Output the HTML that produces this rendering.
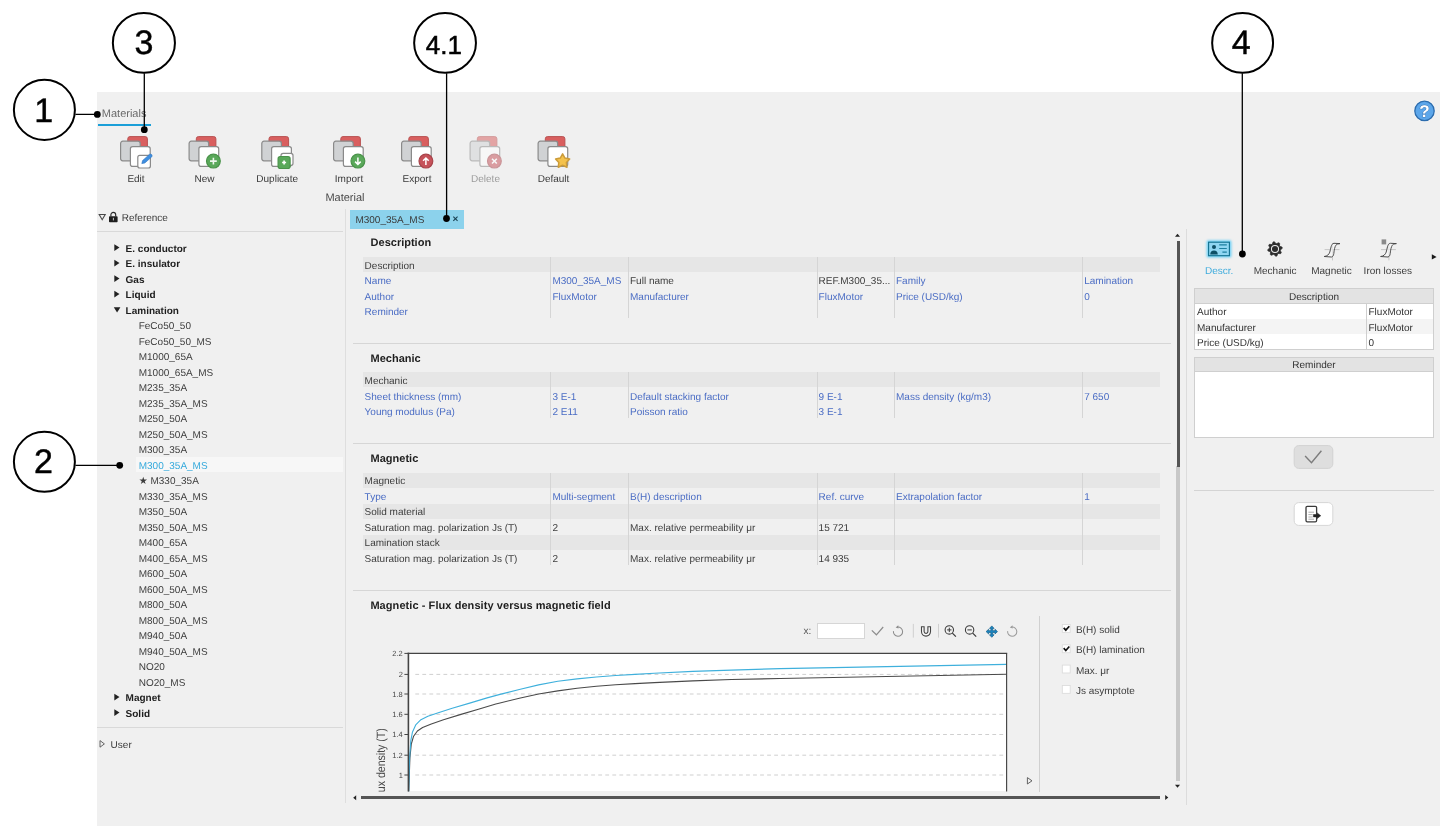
<!DOCTYPE html><html><head><meta charset="utf-8"><title>Materials</title><style>
html,body{margin:0;padding:0;background:#fff;}
body{width:1452px;height:833px;position:relative;overflow:hidden;font-family:"Liberation Sans","DejaVu Sans",sans-serif;font-size:10px;color:#3c3c3c;}
.abs{position:absolute;}
#root{position:absolute;left:0;top:0;width:1452px;height:833px;will-change:transform;text-rendering:geometricPrecision;}
#panel{position:absolute;left:97px;top:92px;width:1343px;height:734px;background:#f0f0f0;}
.t{position:absolute;white-space:nowrap;line-height:1;}
.b{font-weight:bold;color:#1e1e1e;}
.blue{color:#4a6cc4;}
.hl{color:#33a9dc;}
svg{position:absolute;left:0;top:0;overflow:visible;}
.row{position:absolute;height:15.5px;}
.hdr{background:#e6e6e6;}
.vl{position:absolute;width:1.2px;background:#d5d5d5;}
.hlne{position:absolute;height:1px;background:#d6d6d6;}
</style></head><body>
<div id="root">
<div id="panel"></div>
<div class="t " style="left:101.8px;top:109px;font-size:11px;color:#6a6a6a;">Materials</div>
<div class="abs" style="left:98px;top:123.5px;width:53px;height:2.2px;background:#1b9fd8;"></div>
<svg width="1452" height="833" viewBox="0 0 1452 833"><g transform="translate(120,136)"><rect x="7.8" y="0.6" width="19.6" height="19" rx="2.2" fill="#d95f5f" stroke="#b85252" stroke-width="1"/><rect x="0.6" y="5.2" width="19.6" height="19.6" rx="2.2" fill="#d0d2d4" stroke="#8a8a8a" stroke-width="1.2"/><rect x="10.4" y="10.6" width="19.8" height="19.8" rx="2.2" fill="#fff" stroke="#8a8a8a" stroke-width="1.2"/><rect x="17.8" y="19.4" width="12.6" height="12.6" rx="2" fill="#fff" stroke="#8a8a8a" stroke-width="1.2"/><path d="M21.8 27.6 L22.6 24.6 L29.4 18.4 Q30.8 17.6 31.8 18.8 Q32.6 20 31.6 21 L24.8 27 Z" fill="#3f8fe0" stroke="#2f74c0" stroke-width="0.6"/></g><g transform="translate(188.5,136)"><rect x="7.8" y="0.6" width="19.6" height="19" rx="2.2" fill="#d95f5f" stroke="#b85252" stroke-width="1"/><rect x="0.6" y="5.2" width="19.6" height="19.6" rx="2.2" fill="#d0d2d4" stroke="#8a8a8a" stroke-width="1.2"/><rect x="10.4" y="10.6" width="19.8" height="19.8" rx="2.2" fill="#fff" stroke="#8a8a8a" stroke-width="1.2"/><circle cx="24.9" cy="25.1" r="6.9" fill="#5aa85a" stroke="#4a934a" stroke-width="1.2"/><path d="M24.9 21.7 V28.5 M21.5 25.1 H28.3" stroke="#eef6ee" stroke-width="1.6" fill="none"/></g><g transform="translate(261.2,136)"><rect x="7.8" y="0.6" width="19.6" height="19" rx="2.2" fill="#d95f5f" stroke="#b85252" stroke-width="1"/><rect x="0.6" y="5.2" width="19.6" height="19.6" rx="2.2" fill="#d0d2d4" stroke="#8a8a8a" stroke-width="1.2"/><rect x="10.4" y="10.6" width="19.8" height="19.8" rx="2.2" fill="#fff" stroke="#8a8a8a" stroke-width="1.2"/><rect x="19.8" y="17.4" width="12" height="12" rx="2.2" fill="#fff" stroke="#8a8a8a" stroke-width="1.2"/><rect x="16.9" y="20.5" width="12" height="12" rx="2.2" fill="#5aa85a" stroke="#4a934a" stroke-width="1.2"/><path d="M22.9 24.5 V28.5 M20.9 26.5 H24.9" stroke="#fff" stroke-width="1.6" fill="none"/></g><g transform="translate(333,136)"><rect x="7.8" y="0.6" width="19.6" height="19" rx="2.2" fill="#d95f5f" stroke="#b85252" stroke-width="1"/><rect x="0.6" y="5.2" width="19.6" height="19.6" rx="2.2" fill="#d0d2d4" stroke="#8a8a8a" stroke-width="1.2"/><rect x="10.4" y="10.6" width="19.8" height="19.8" rx="2.2" fill="#fff" stroke="#8a8a8a" stroke-width="1.2"/><circle cx="24.9" cy="25.1" r="6.9" fill="#5aa85a" stroke="#4a934a" stroke-width="1.2"/><path d="M24.9 21.4 V28.2 M22.1 25.6 L24.9 28.4 L27.7 25.6" stroke="#fff" stroke-width="1.5" fill="none"/></g><g transform="translate(401,136)"><rect x="7.8" y="0.6" width="19.6" height="19" rx="2.2" fill="#d95f5f" stroke="#b85252" stroke-width="1"/><rect x="0.6" y="5.2" width="19.6" height="19.6" rx="2.2" fill="#d0d2d4" stroke="#8a8a8a" stroke-width="1.2"/><rect x="10.4" y="10.6" width="19.8" height="19.8" rx="2.2" fill="#fff" stroke="#8a8a8a" stroke-width="1.2"/><circle cx="24.9" cy="25.1" r="6.9" fill="#c6525a" stroke="#a8434a" stroke-width="1.2"/><path d="M24.9 29 V22.2 M22.1 24.8 L24.9 22 L27.7 24.8" stroke="#fff" stroke-width="1.5" fill="none"/></g><g transform="translate(469.5,136)" opacity="0.52"><rect x="7.8" y="0.6" width="19.6" height="19" rx="2.2" fill="#d95f5f" stroke="#b85252" stroke-width="1"/><rect x="0.6" y="5.2" width="19.6" height="19.6" rx="2.2" fill="#d0d2d4" stroke="#8a8a8a" stroke-width="1.2"/><rect x="10.4" y="10.6" width="19.8" height="19.8" rx="2.2" fill="#fff" stroke="#8a8a8a" stroke-width="1.2"/><circle cx="24.9" cy="25.1" r="6.9" fill="#c6525a" stroke="#a8434a" stroke-width="1.2"/><path d="M22.5 22.7 L27.3 27.5 M27.3 22.7 L22.5 27.5" stroke="#fff" stroke-width="1.6" fill="none"/></g><g transform="translate(537.5,136)"><rect x="7.8" y="0.6" width="19.6" height="19" rx="2.2" fill="#d95f5f" stroke="#b85252" stroke-width="1"/><rect x="0.6" y="5.2" width="19.6" height="19.6" rx="2.2" fill="#d0d2d4" stroke="#8a8a8a" stroke-width="1.2"/><rect x="10.4" y="10.6" width="19.8" height="19.8" rx="2.2" fill="#fff" stroke="#8a8a8a" stroke-width="1.2"/><polygon points="25.10,17.90 27.45,22.06 32.14,23.01 28.90,26.54 29.45,31.29 25.10,29.30 20.75,31.29 21.30,26.54 18.06,23.01 22.75,22.06" fill="#f4c24c" stroke="#cc9c3a" stroke-width="1.5" stroke-linejoin="round"/></g></svg>
<div class="t " style="left:36px;width:200px;text-align:center;top:175px;font-size:10px;color:#3a3a3a;">Edit</div>
<div class="t " style="left:104.5px;width:200px;text-align:center;top:175px;font-size:10px;color:#3a3a3a;">New</div>
<div class="t " style="left:177.2px;width:200px;text-align:center;top:175px;font-size:10px;color:#3a3a3a;">Duplicate</div>
<div class="t " style="left:249px;width:200px;text-align:center;top:175px;font-size:10px;color:#3a3a3a;">Import</div>
<div class="t " style="left:317px;width:200px;text-align:center;top:175px;font-size:10px;color:#3a3a3a;">Export</div>
<div class="t " style="left:385.5px;width:200px;text-align:center;top:175px;font-size:10px;color:#9c9c9c;">Delete</div>
<div class="t " style="left:453.5px;width:200px;text-align:center;top:175px;font-size:10px;color:#3a3a3a;">Default</div>
<div class="t " style="left:325.4px;top:193px;font-size:11px;color:#4a4a4a;">Material</div>
<div class="t " style="left:121.8px;top:214px;font-size:10px;color:#3c3c3c;">Reference</div>
<div class="t " style="left:110.6px;top:741px;font-size:10px;color:#3c3c3c;">User</div>
<div class="hlne" style="left:97px;top:231px;width:246px;background:#d9d9d9;"></div>
<div class="hlne" style="left:97px;top:726.5px;width:246px;background:#d9d9d9;"></div>
<div class="abs" style="left:136px;top:457.3px;width:207px;height:15.2px;background:#f7f7f7;"></div>
<div class="t b" style="left:125.6px;top:245px;font-size:10px;">E. conductor</div>
<div class="t b" style="left:125.6px;top:260px;font-size:10px;">E. insulator</div>
<div class="t b" style="left:125.6px;top:276px;font-size:10px;">Gas</div>
<div class="t b" style="left:125.6px;top:291px;font-size:10px;">Liquid</div>
<div class="t b" style="left:125.6px;top:307px;font-size:10px;">Lamination</div>
<div class="t " style="left:138.7px;top:322px;font-size:10px;">FeCo50_50</div>
<div class="t " style="left:138.7px;top:338px;font-size:10px;">FeCo50_50_MS</div>
<div class="t " style="left:138.7px;top:353px;font-size:10px;">M1000_65A</div>
<div class="t " style="left:138.7px;top:369px;font-size:10px;">M1000_65A_MS</div>
<div class="t " style="left:138.7px;top:384px;font-size:10px;">M235_35A</div>
<div class="t " style="left:138.7px;top:400px;font-size:10px;">M235_35A_MS</div>
<div class="t " style="left:138.7px;top:415px;font-size:10px;">M250_50A</div>
<div class="t " style="left:138.7px;top:431px;font-size:10px;">M250_50A_MS</div>
<div class="t " style="left:138.7px;top:446px;font-size:10px;">M300_35A</div>
<div class="t hl" style="left:138.7px;top:462px;font-size:10px;">M300_35A_MS</div>
<div class="t " style="left:138.7px;top:477px;font-size:10px;">★ M330_35A</div>
<div class="t " style="left:138.7px;top:493px;font-size:10px;">M330_35A_MS</div>
<div class="t " style="left:138.7px;top:508px;font-size:10px;">M350_50A</div>
<div class="t " style="left:138.7px;top:524px;font-size:10px;">M350_50A_MS</div>
<div class="t " style="left:138.7px;top:539px;font-size:10px;">M400_65A</div>
<div class="t " style="left:138.7px;top:555px;font-size:10px;">M400_65A_MS</div>
<div class="t " style="left:138.7px;top:570px;font-size:10px;">M600_50A</div>
<div class="t " style="left:138.7px;top:586px;font-size:10px;">M600_50A_MS</div>
<div class="t " style="left:138.7px;top:601px;font-size:10px;">M800_50A</div>
<div class="t " style="left:138.7px;top:617px;font-size:10px;">M800_50A_MS</div>
<div class="t " style="left:138.7px;top:632px;font-size:10px;">M940_50A</div>
<div class="t " style="left:138.7px;top:648px;font-size:10px;">M940_50A_MS</div>
<div class="t " style="left:138.7px;top:663px;font-size:10px;">NO20</div>
<div class="t " style="left:138.7px;top:679px;font-size:10px;">NO20_MS</div>
<div class="t b" style="left:125.6px;top:694px;font-size:10px;">Magnet</div>
<div class="t b" style="left:125.6px;top:710px;font-size:10px;">Solid</div>
<svg width="1452" height="833" viewBox="0 0 1452 833"><path d="M114.3 244.3 v6.6 l5.2 -3.3 z" fill="#222"/><path d="M114.3 259.79999999999995 v6.6 l5.2 -3.3 z" fill="#222"/><path d="M114.3 275.29999999999995 v6.6 l5.2 -3.3 z" fill="#222"/><path d="M114.3 290.79999999999995 v6.6 l5.2 -3.3 z" fill="#222"/><path d="M113.8 307.2 h6.6 l-3.3 5.4 z" fill="#222"/><path d="M114.3 693.8 v6.6 l5.2 -3.3 z" fill="#222"/><path d="M114.3 709.3 v6.6 l5.2 -3.3 z" fill="#222"/><path d="M99.2 214.5 h6 l-3 5.2 z" fill="none" stroke="#484848" stroke-width="1.1"/><path d="M100 740.6 v6.6 l4.4 -3.3 z" fill="none" stroke="#555" stroke-width="0.9"/><rect x="109" y="216.2" width="8.6" height="6" rx="0.8" fill="#1e1e1e"/><path d="M110.9 216.4 v-1.6 a2.4 2.4 0 0 1 4.8 0 v1.6" fill="none" stroke="#2a2a2a" stroke-width="1.15"/><rect x="112.9" y="217.8" width="0.9" height="2.6" fill="#ddd"/></svg>
<div class="vl" style="left:345.2px;top:209px;height:594px;background:#dedede;"></div>
<div class="vl" style="left:1186.2px;top:229px;height:576px;background:#dcdcdc;"></div>
<div class="abs" style="left:349.6px;top:210.3px;width:114.4px;height:18.4px;background:#8cd2ec;"></div>
<div class="t " style="left:355.4px;top:216px;font-size:10px;color:#3a3a3a;">M300_35A_MS</div>
<div class="t " style="left:452.6px;top:215px;font-size:10px;color:#173f50;font-weight:bold;">×</div>
<div class="t b" style="left:370.6px;top:238px;font-size:11px;">Description</div>
<div class="row hdr" style="left:362.6px;top:256.9px;width:797px;height:15.1px;"></div>
<div class="vl" style="left:550.1px;top:256.9px;height:61.6px;"></div>
<div class="vl" style="left:628.0px;top:256.9px;height:61.6px;"></div>
<div class="vl" style="left:816.5px;top:256.9px;height:61.6px;"></div>
<div class="vl" style="left:893.7px;top:256.9px;height:61.6px;"></div>
<div class="vl" style="left:1081.9px;top:256.9px;height:61.6px;"></div>
<div class="t " style="left:364.6px;top:262px;font-size:10px;">Description</div>
<div class="t blue" style="left:364.6px;top:277px;font-size:10px;">Name</div>
<div class="t blue" style="left:552.4px;top:277px;font-size:10px;">M300_35A_MS</div>
<div class="t " style="left:630px;top:277px;font-size:10px;">Full name</div>
<div class="t " style="left:818.6px;top:277px;font-size:10px;">REF.M300_35...</div>
<div class="t blue" style="left:896px;top:277px;font-size:10px;">Family</div>
<div class="t blue" style="left:1084.2px;top:277px;font-size:10px;">Lamination</div>
<div class="t blue" style="left:364.6px;top:293px;font-size:10px;">Author</div>
<div class="t blue" style="left:552.4px;top:293px;font-size:10px;">FluxMotor</div>
<div class="t blue" style="left:630px;top:293px;font-size:10px;">Manufacturer</div>
<div class="t blue" style="left:818.6px;top:293px;font-size:10px;">FluxMotor</div>
<div class="t blue" style="left:896px;top:293px;font-size:10px;">Price (USD/kg)</div>
<div class="t blue" style="left:1084.2px;top:293px;font-size:10px;">0</div>
<div class="t blue" style="left:364.6px;top:308px;font-size:10px;">Reminder</div>
<div class="hlne" style="left:352.5px;top:343.0px;width:818px;height:1.3px;"></div>
<div class="t b" style="left:370.6px;top:354px;font-size:11px;">Mechanic</div>
<div class="row hdr" style="left:362.6px;top:372.4px;width:797px;height:15.1px;"></div>
<div class="vl" style="left:550.1px;top:372.40000000000003px;height:46.1px;"></div>
<div class="vl" style="left:628.0px;top:372.40000000000003px;height:46.1px;"></div>
<div class="vl" style="left:816.5px;top:372.40000000000003px;height:46.1px;"></div>
<div class="vl" style="left:893.7px;top:372.40000000000003px;height:46.1px;"></div>
<div class="vl" style="left:1081.9px;top:372.40000000000003px;height:46.1px;"></div>
<div class="t " style="left:364.6px;top:377px;font-size:10px;">Mechanic</div>
<div class="t blue" style="left:364.6px;top:393px;font-size:10px;">Sheet thickness (mm)</div>
<div class="t blue" style="left:552.4px;top:393px;font-size:10px;">3 E-1</div>
<div class="t blue" style="left:630px;top:393px;font-size:10px;">Default stacking factor</div>
<div class="t blue" style="left:818.6px;top:393px;font-size:10px;">9 E-1</div>
<div class="t blue" style="left:896px;top:393px;font-size:10px;">Mass density (kg/m3)</div>
<div class="t blue" style="left:1084.2px;top:393px;font-size:10px;">7 650</div>
<div class="t blue" style="left:364.6px;top:408px;font-size:10px;">Young modulus (Pa)</div>
<div class="t blue" style="left:552.4px;top:408px;font-size:10px;">2 E11</div>
<div class="t blue" style="left:630px;top:408px;font-size:10px;">Poisson ratio</div>
<div class="t blue" style="left:818.6px;top:408px;font-size:10px;">3 E-1</div>
<div class="hlne" style="left:352.5px;top:443.09999999999997px;width:818px;height:1.3px;"></div>
<div class="t b" style="left:370.6px;top:454px;font-size:11px;">Magnetic</div>
<div class="row hdr" style="left:362.6px;top:472.5px;width:797px;height:15.1px;"></div>
<div class="row hdr" style="left:362.6px;top:503.5px;width:797px;height:15.1px;"></div>
<div class="row hdr" style="left:362.6px;top:534.5px;width:797px;height:15.1px;"></div>
<div class="vl" style="left:550.1px;top:472.5px;height:92.6px;"></div>
<div class="vl" style="left:628.0px;top:472.5px;height:92.6px;"></div>
<div class="vl" style="left:816.5px;top:472.5px;height:92.6px;"></div>
<div class="vl" style="left:893.7px;top:472.5px;height:92.6px;"></div>
<div class="vl" style="left:1081.9px;top:472.5px;height:92.6px;"></div>
<div class="t " style="left:364.6px;top:477px;font-size:10px;">Magnetic</div>
<div class="t blue" style="left:364.6px;top:493px;font-size:10px;">Type</div>
<div class="t blue" style="left:552.4px;top:493px;font-size:10px;">Multi-segment</div>
<div class="t blue" style="left:630px;top:493px;font-size:10px;">B(H) description</div>
<div class="t blue" style="left:818.6px;top:493px;font-size:10px;">Ref. curve</div>
<div class="t blue" style="left:896px;top:493px;font-size:10px;">Extrapolation factor</div>
<div class="t blue" style="left:1084.2px;top:493px;font-size:10px;">1</div>
<div class="t " style="left:364.6px;top:508px;font-size:10px;">Solid material</div>
<div class="t " style="left:364.6px;top:524px;font-size:10px;">Saturation mag. polarization Js (T)</div>
<div class="t " style="left:552.4px;top:524px;font-size:10px;">2</div>
<div class="t " style="left:630px;top:524px;font-size:10px;">Max. relative permeability μr</div>
<div class="t " style="left:818.6px;top:524px;font-size:10px;">15 721</div>
<div class="t " style="left:364.6px;top:539px;font-size:10px;">Lamination stack</div>
<div class="t " style="left:364.6px;top:555px;font-size:10px;">Saturation mag. polarization Js (T)</div>
<div class="t " style="left:552.4px;top:555px;font-size:10px;">2</div>
<div class="t " style="left:630px;top:555px;font-size:10px;">Max. relative permeability μr</div>
<div class="t " style="left:818.6px;top:555px;font-size:10px;">14 935</div>
<div class="hlne" style="left:352.5px;top:589.7px;width:818px;height:1.3px;"></div>
<div class="t b" style="left:370.4px;top:601px;font-size:11px;letter-spacing:0.07px;">Magnetic - Flux density versus magnetic field</div>
<div class="abs" style="left:408.4px;top:653.4px;width:598.4px;height:138.1px;background:#fff;"></div>
<svg width="1452" height="833" viewBox="0 0 1452 833"><defs><clipPath id="pc"><rect x="407" y="652" width="601" height="139.5"/></clipPath></defs><path d="M415.3 674.4 H1005.6" stroke="#cfcfcf" stroke-width="1" stroke-dasharray="3.8 3.237"/><path d="M415.3 694.0 H1005.6" stroke="#cfcfcf" stroke-width="1" stroke-dasharray="3.8 3.237"/><path d="M415.3 714.3 H1005.6" stroke="#cfcfcf" stroke-width="1" stroke-dasharray="3.8 3.237"/><path d="M415.3 734.5 H1005.6" stroke="#cfcfcf" stroke-width="1" stroke-dasharray="3.8 3.237"/><path d="M415.3 755.2 H1005.6" stroke="#cfcfcf" stroke-width="1" stroke-dasharray="3.8 3.237"/><path d="M415.3 775.0 H1005.6" stroke="#cfcfcf" stroke-width="1" stroke-dasharray="3.8 3.237"/><polyline points="408.7,791.5 409.3,775 409.9,758 411.3,744 413.6,736.2 417.4,731 422.6,727.5 431.3,724 443.5,719.7 461,714.4 478.4,709.2 495.8,704 500,703 519.3,698.2 538.6,694 557.8,690.9 577.1,688.2 596.4,686.3 615.7,684.7 635,683.6 654.3,682.6 692.8,680.9 731.4,679.5 780,678.5 1006.6,674.2" fill="none" stroke="#4a4a4a" stroke-width="1.1" stroke-linejoin="round" clip-path="url(#pc)"/><polyline points="408.7,791.5 409.1,775 409.6,758 410.8,740.6 412.5,731.9 415.7,724.9 420.9,719.7 427.9,716.2 438.3,712.7 452.2,708.3 469.7,703.1 487.1,697.9 500,694.4 519.3,689.5 538.6,684.9 557.8,681.3 577.1,678.9 596.4,677 615.7,675.5 635,674.4 654.3,673.3 692.8,671.4 731.4,670.1 780,668.6 1006.6,664.4" fill="none" stroke="#3fb0dc" stroke-width="1.1" stroke-linejoin="round" clip-path="url(#pc)"/><path d="M408.4 652.7 V791.5" stroke="#444" stroke-width="1.6"/><path d="M407.6 653.4 H1007.2" stroke="#444" stroke-width="1.4"/><path d="M1006.6 653.4 V791.5" stroke="#444" stroke-width="1.15"/><path d="M404.4 653.4 H408" stroke="#444" stroke-width="1"/><text x="402.8" y="656.1" font-size="7.5" text-anchor="end" fill="#444" font-family="Liberation Sans, sans-serif">2.2</text><path d="M404.4 674.4 H408" stroke="#444" stroke-width="1"/><text x="402.8" y="677.1" font-size="7.5" text-anchor="end" fill="#444" font-family="Liberation Sans, sans-serif">2</text><path d="M404.4 694.0 H408" stroke="#444" stroke-width="1"/><text x="402.8" y="696.7" font-size="7.5" text-anchor="end" fill="#444" font-family="Liberation Sans, sans-serif">1.8</text><path d="M404.4 714.3 H408" stroke="#444" stroke-width="1"/><text x="402.8" y="717.0" font-size="7.5" text-anchor="end" fill="#444" font-family="Liberation Sans, sans-serif">1.6</text><path d="M404.4 734.5 H408" stroke="#444" stroke-width="1"/><text x="402.8" y="737.2" font-size="7.5" text-anchor="end" fill="#444" font-family="Liberation Sans, sans-serif">1.4</text><path d="M404.4 755.2 H408" stroke="#444" stroke-width="1"/><text x="402.8" y="757.9000000000001" font-size="7.5" text-anchor="end" fill="#444" font-family="Liberation Sans, sans-serif">1.2</text><path d="M404.4 775.0 H408" stroke="#444" stroke-width="1"/><text x="402.8" y="777.7" font-size="7.5" text-anchor="end" fill="#444" font-family="Liberation Sans, sans-serif">1</text><path d="M871.8 630.4 L876.4 634.8 L883.2 627" fill="none" stroke="#8c8c8c" stroke-width="1.2"/><path d="M897.4 627.1 A4.6 4.6 0 1 1 893.44 631.06" fill="none" stroke="#8c8c8c" stroke-width="1.05"/><path d="M898.3 625.2 L895.6 627.4 L898.5 628.6 Z" fill="#8c8c8c"/><path d="M1011.6 627.1 A4.6 4.6 0 1 1 1007.64 631.06" fill="none" stroke="#9c9c9c" stroke-width="1.05"/><path d="M1012.5 625.2 L1009.8000000000001 627.4 L1012.7 628.6 Z" fill="#9c9c9c"/><path d="M913.3 623.9 V637.6 M938.5 623.9 V637.6" stroke="#cfcfcf" stroke-width="1"/><path d="M921.5 626.7 V631.6 A4.5 4.5 0 0 0 930.5 631.6 V626.7 H927.9 V631.5 A1.9 1.9 0 0 1 924.1 631.5 V626.7 Z" fill="#fafafa" stroke="#444" stroke-width="1.1"/><circle cx="949.3" cy="629.9" r="4.2" fill="none" stroke="#3a3a3a" stroke-width="1.05"/><path d="M952.4 633.1 L955.9 636.6" stroke="#3a3a3a" stroke-width="1.25"/><path d="M947.0999999999999 629.9 H951.5" stroke="#3a3a3a" stroke-width="1"/><path d="M949.3 627.7 V632.1" stroke="#3a3a3a" stroke-width="1"/><circle cx="969.6" cy="629.9" r="4.2" fill="none" stroke="#3a3a3a" stroke-width="1.05"/><path d="M972.7 633.1 L976.2 636.6" stroke="#3a3a3a" stroke-width="1.25"/><path d="M967.4 629.9 H971.8000000000001" stroke="#3a3a3a" stroke-width="1"/><path d="M991.8 625.9 l2.3 2.5 h-1.4 v2.3 h2.3 v-1.4 l2.5 2.3 l-2.5 2.3 v-1.4 h-2.3 v2.3 h1.4 l-2.3 2.5 l-2.3 -2.5 h1.4 v-2.3 h-2.3 v1.4 l-2.5 -2.3 l2.5 -2.3 v1.4 h2.3 v-2.3 h-1.4 z" fill="#1b86c2" stroke="#145f8a" stroke-width="0.7" stroke-linejoin="round"/><path d="M1027.4 777.6 v6.4 l4.6 -3.2 z" fill="none" stroke="#555" stroke-width="0.9"/><rect x="1062.3" y="624.5" width="7.9" height="7.9" fill="#fff" stroke="#dcdcdc" stroke-width="0.9"/><path d="M1063.7 627.85 L1065.8 630.1500000000001 L1069.3 626.25" fill="none" stroke="#111" stroke-width="1.7"/><rect x="1062.3" y="644.8" width="7.9" height="7.9" fill="#fff" stroke="#dcdcdc" stroke-width="0.9"/><path d="M1063.7 648.15 L1065.8 650.45 L1069.3 646.55" fill="none" stroke="#111" stroke-width="1.7"/><rect x="1062.3" y="665.0999999999999" width="7.9" height="7.9" fill="#fff" stroke="#dcdcdc" stroke-width="0.9"/><rect x="1062.3" y="685.4499999999999" width="7.9" height="7.9" fill="#fff" stroke="#dcdcdc" stroke-width="0.9"/></svg>
<div class="abs" style="left:340px;top:650px;width:100px;height:141.5px;overflow:hidden;"><div class="t" style="left:35.4px;top:150.9px;font-size:12px;color:#4a4a4a;transform-origin:0 0;transform:rotate(-90deg) scaleX(0.88);">Flux density (T)</div></div>
<div class="t" style="left:803.6px;top:627px;font-size:10px;color:#555;">x:</div>
<div class="abs" style="left:817.2px;top:623.1px;width:46px;height:14.4px;background:#fff;border:1px solid #d6d6d6;box-sizing:content-box;"></div>
<div class="vl" style="left:1039.2px;top:615.5px;height:176px;background:#d0d0d0;"></div>
<div class="t" style="left:1075.9px;top:626px;font-size:10px;color:#3c3c3c;">B(H) solid</div>
<div class="t" style="left:1075.9px;top:646px;font-size:10px;color:#3c3c3c;">B(H) lamination</div>
<div class="t" style="left:1075.9px;top:667px;font-size:10px;color:#3c3c3c;">Max. μr</div>
<div class="t" style="left:1075.9px;top:687px;font-size:10px;color:#3c3c3c;">Js asymptote</div>
<div class="abs" style="left:1176.4px;top:466px;width:3.2px;height:315px;background:#c8c8c8;"></div>
<div class="abs" style="left:1176.5px;top:241px;width:3.1px;height:225.8px;background:#555;"></div>
<div class="abs" style="left:360.6px;top:796.2px;width:799.6px;height:3px;background:#555;"></div>
<svg width="1452" height="833" viewBox="0 0 1452 833"><path d="M1175 236.8 h5 l-2.5 -3 z" fill="#222"/><path d="M1175 784.8 h5 l-2.5 3 z" fill="#222"/><path d="M356.2 795.2 v5 l-3 -2.5 z" fill="#222"/><path d="M1165.2 795.1 v5 l3.1 -2.5 z" fill="#222"/></svg>
<svg width="1452" height="833" viewBox="0 0 1452 833"><circle cx="1424.5" cy="110.9" r="10.9" fill="#fff" opacity="0.55"/><circle cx="1424.5" cy="110.9" r="9.7" fill="#5ca6ea" stroke="#2c6cad" stroke-width="1.3"/><text x="1424.5" y="117.3" font-size="17" font-weight="bold" text-anchor="middle" fill="#fff" stroke="#2d629f" stroke-width="0.7" paint-order="stroke" font-family="Liberation Sans, sans-serif">?</text><defs><filter id="glow" x="-30%" y="-30%" width="160%" height="160%"><feGaussianBlur stdDeviation="1.1"/></filter></defs><rect x="1206.6" y="240.2" width="24.8" height="17.4" rx="1.5" fill="#6fd0f5" filter="url(#glow)"/><rect x="1208.6" y="242.2" width="20.8" height="13.5" fill="#8fd6f2" stroke="#11708f" stroke-width="1.1"/><circle cx="1214" cy="246.9" r="2" fill="#0d4f66"/><path d="M1210.2 254.4 Q1210.4 250.4 1214 250.4 Q1217.6 250.4 1217.8 254.4 Z" fill="#0d4f66"/><path d="M1219.2 244.9 H1226.8 M1219.2 248.5 H1226.8 M1222.4 252.1 H1226.8" stroke="#1c7fa0" stroke-width="1.2"/><polygon points="1273.11,241.95 1274.36,241.73 1276.15,243.83 1278.65,242.68 1279.69,243.41 1279.47,246.15 1282.05,247.11 1282.27,248.36 1280.17,250.15 1281.32,252.65 1280.59,253.69 1277.85,253.47 1276.89,256.05 1275.64,256.27 1273.85,254.17 1271.35,255.32 1270.31,254.59 1270.53,251.85 1267.95,250.89 1267.73,249.64 1269.83,247.85 1268.68,245.35 1269.41,244.31 1272.15,244.53" fill="#2c2c2c" stroke="#2c2c2c" stroke-width="0.7" stroke-linejoin="round"/><circle cx="1275.0" cy="249.0" r="3.55" fill="none" stroke="#ececec" stroke-width="1.05"/><g transform="translate(1324.2,243)"><path d="M0.4 6.6 H15.3 M8.3 0.8 V17.4" stroke="#c2c2c2" stroke-width="0.9" fill="none"/><path d="M0 13.5 C3 13.2 4.8 11.5 5.6 9.1 C6.2 7 6.4 5.5 6.9 3.8 C7.4 2 8 0.4 9.8 0.3 L15.8 0.6 L13.4 1 C12.4 1.2 11.6 2.2 11 3.6 C10 6 9.9 8.5 9.6 10.5 C9.3 12.4 8.8 13.6 7.4 14 Z" fill="#fafafa" fill-opacity="0.55" stroke="#444" stroke-width="0.95" stroke-linejoin="round"/></g><g transform="translate(1380.6,243)"><path d="M0.4 6.6 H15.3 M8.3 0.8 V17.4" stroke="#c2c2c2" stroke-width="0.9" fill="none"/><path d="M0 13.5 C3 13.2 4.8 11.5 5.6 9.1 C6.2 7 6.4 5.5 6.9 3.8 C7.4 2 8 0.4 9.8 0.3 L15.8 0.6 L13.4 1 C12.4 1.2 11.6 2.2 11 3.6 C10 6 9.9 8.5 9.6 10.5 C9.3 12.4 8.8 13.6 7.4 14 Z" fill="#fafafa" fill-opacity="0.55" stroke="#444" stroke-width="0.95" stroke-linejoin="round"/></g><rect x="1381.6" y="239.4" width="4.6" height="5" fill="#8a8a8a"/><path d="M1431.8 254.3 v5.2 l4.8 -2.6 z" fill="#1a1a1a"/><rect x="1294.2" y="445.6" width="38.6" height="22.8" rx="4.5" fill="#dedede" stroke="#d2d2d2" stroke-width="1"/><path d="M1305.1 455.9 L1311.5 462.8 L1321.4 450.7" fill="none" stroke="#7c7c7c" stroke-width="1.4"/><rect x="1294.2" y="502.6" width="38.6" height="22.8" rx="4.5" fill="#fff" stroke="#d6d6d6" stroke-width="1"/><rect x="1306" y="506.3" width="10.6" height="15.6" rx="1.3" fill="#fff" stroke="#3a3a3a" stroke-width="1.3"/><path d="M1308.4 512.2 H1314 M1308.4 514.6 H1312.6 M1308.4 517 H1312.6 M1308.4 519.2 H1314" stroke="#a4a4a4" stroke-width="0.9"/><path d="M1313.4 514.5 h3.8 v-1.6 l3.6 2.8 l-3.6 2.8 v-1.6 h-3.8 z" fill="#222" stroke="#222" stroke-width="0.5" stroke-linejoin="round"/></svg>
<div class="t" style="left:1169.2px;width:100px;text-align:center;top:267px;font-size:10px;color:#3eabdc;">Descr.</div>
<div class="t" style="left:1225.1px;width:100px;text-align:center;top:267px;font-size:10px;color:#3c3c3c;">Mechanic</div>
<div class="t" style="left:1281.5px;width:100px;text-align:center;top:267px;font-size:10px;color:#3c3c3c;">Magnetic</div>
<div class="t" style="left:1337.8px;width:100px;text-align:center;top:267px;font-size:10px;color:#3c3c3c;">Iron losses</div>
<div class="abs" style="left:1194.4px;top:288.3px;width:237.5px;height:60px;border:1px solid #cfcfcf;background:#fff;box-sizing:content-box;"></div>
<div class="abs" style="left:1195.4px;top:289.3px;width:237.5px;height:14px;background:#e3e3e3;border-bottom:1px solid #cfcfcf;"></div>
<div class="abs" style="left:1195.4px;top:319.3px;width:237.5px;height:15.2px;background:#f4f4f4;"></div>
<div class="vl" style="left:1365.8px;top:304.3px;height:45px;background:#cfcfcf;"></div>
<div class="t" style="left:1214px;width:200px;text-align:center;top:293px;font-size:10px;color:#333;">Description</div>
<div class="t" style="left:1197px;top:308px;font-size:10px;color:#333;">Author</div>
<div class="t" style="left:1368.5px;top:308px;font-size:10px;color:#333;">FluxMotor</div>
<div class="t" style="left:1197px;top:324px;font-size:10px;color:#333;">Manufacturer</div>
<div class="t" style="left:1368.5px;top:324px;font-size:10px;color:#333;">FluxMotor</div>
<div class="t" style="left:1197px;top:339px;font-size:10px;color:#333;">Price (USD/kg)</div>
<div class="t" style="left:1368.5px;top:339px;font-size:10px;color:#333;">0</div>
<div class="abs" style="left:1194.4px;top:357.2px;width:237.5px;height:79px;border:1px solid #cfcfcf;background:#fff;box-sizing:content-box;"></div>
<div class="abs" style="left:1195.4px;top:358.2px;width:237.5px;height:12.8px;background:#e3e3e3;border-bottom:1px solid #cfcfcf;"></div>
<div class="t" style="left:1214px;width:200px;text-align:center;top:361px;font-size:10px;color:#333;">Reminder</div>
<div class="hlne" style="left:1194px;top:490px;width:240px;background:#d4d4d4;"></div>
<svg width="1452" height="833" viewBox="0 0 1452 833"><ellipse cx="44.4" cy="109.9" rx="30.5" ry="30.05" fill="#fff" stroke="#000" stroke-width="2"/><text x="43.6" y="121.9" font-size="34" text-anchor="middle" fill="#000" stroke="#000" stroke-width="0.45" font-family="Liberation Sans, sans-serif">1</text><ellipse cx="44.4" cy="461.8" rx="30.5" ry="29.95" fill="#fff" stroke="#000" stroke-width="2"/><text x="43.5" y="473" font-size="34" text-anchor="middle" fill="#000" stroke="#000" stroke-width="0.45" font-family="Liberation Sans, sans-serif">2</text><ellipse cx="143.9" cy="42.9" rx="31.05" ry="29.85" fill="#fff" stroke="#000" stroke-width="2"/><text x="143.9" y="54.2" font-size="34" text-anchor="middle" fill="#000" stroke="#000" stroke-width="0.45" font-family="Liberation Sans, sans-serif">3</text><ellipse cx="445.05" cy="42.9" rx="30.9" ry="29.85" fill="#fff" stroke="#000" stroke-width="2"/><text x="443.9" y="53.7" font-size="26" text-anchor="middle" fill="#000" stroke="#000" stroke-width="0.5" font-family="Liberation Sans, sans-serif">4.1</text><ellipse cx="1242.6" cy="42.9" rx="30.45" ry="29.85" fill="#fff" stroke="#000" stroke-width="2"/><text x="1241.2" y="53.6" font-size="34" text-anchor="middle" fill="#000" stroke="#000" stroke-width="0.45" font-family="Liberation Sans, sans-serif">4</text><path d="M75.4 114.4 H97 M144.3 73.2 V129.7 M75.4 465.3 H119.7 M446.6 73.2 V218.5 M1242.3 73.2 V254" stroke="#000" stroke-width="1.3" fill="none"/><circle cx="97.3" cy="114.4" r="3.4" fill="#000"/><circle cx="144.3" cy="129.7" r="3.4" fill="#000"/><circle cx="119.7" cy="465.3" r="3.4" fill="#000"/><circle cx="446.5" cy="218.5" r="3.4" fill="#000"/><circle cx="1242.4" cy="254" r="3.4" fill="#000"/></svg>
</div></body></html>
